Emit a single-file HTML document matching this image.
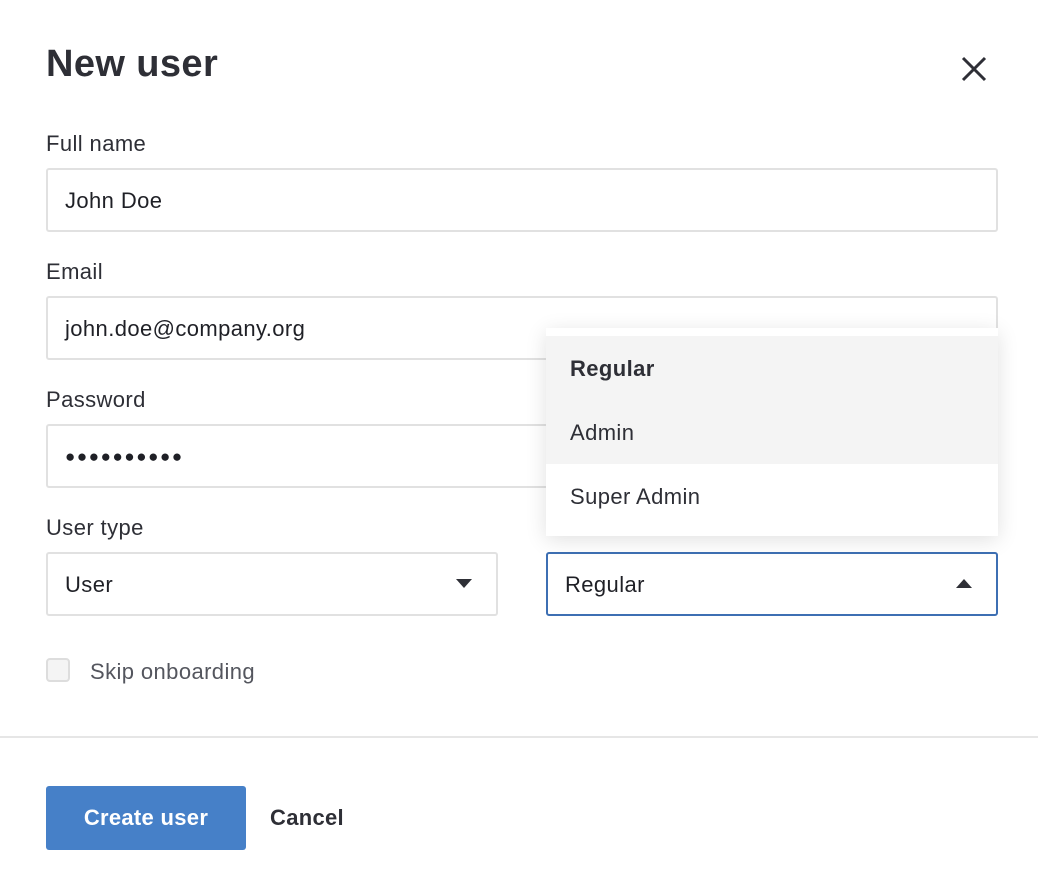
<!DOCTYPE html>
<html><head><style>
body{margin:0;width:1038px;height:878px;background:#fff;font-family:"Liberation Sans",sans-serif;color:#2e2f36;position:relative;overflow:hidden}
.a{position:absolute}
h1{position:absolute;left:46px;top:43px;margin:0;font-size:38px;font-weight:bold;color:#2e2f36;letter-spacing:0.4px}
.lbl{position:absolute;left:46px;font-size:22px;color:#2e2f36;letter-spacing:0.4px}
.inp{position:absolute;box-sizing:border-box;border:2px solid #e1e1e1;border-radius:3px;height:64px;font-size:22px;line-height:62px;padding-left:17px;color:#1f2026;letter-spacing:0.4px}
</style></head><body>
<h1>New user</h1>
<svg class="a" style="left:960px;top:55px" width="28" height="28" viewBox="0 0 28 28"><path d="M3 3L25 25M25 3L3 25" stroke="#2e2f36" stroke-width="3"/></svg>
<div class="lbl" style="top:131px">Full name</div>
<div class="inp" style="left:46px;top:168px;width:952px">John Doe</div>
<div class="lbl" style="top:259px">Email</div>
<div class="inp" style="left:46px;top:296px;width:952px">john.doe@company.org</div>
<div class="lbl" style="top:387px">Password</div>
<div class="inp" style="left:46px;top:424px;width:952px;letter-spacing:1.6px;font-size:17px">●●●●●●●●●●</div>
<div class="lbl" style="top:515px">User type</div>
<div class="inp" style="left:46px;top:552px;width:452px">User</div>
<svg class="a" style="left:456px;top:579px" width="16" height="10"><path d="M0 0H16L8 9Z" fill="#2e2f36"/></svg>
<div class="inp" style="left:546px;top:552px;width:452px;border-color:#3d6fb3">Regular</div>
<svg class="a" style="left:956px;top:579px" width="16" height="10"><path d="M0 9H16L8 0Z" fill="#2e2f36"/></svg>
<div class="a" style="left:546px;top:328px;width:452px;height:208px;background:#fff;box-shadow:0 4px 20px rgba(0,0,0,0.12)">
<div style="position:absolute;top:8px;left:0;right:0;height:128px;background:#f4f4f4"></div>
<div style="position:absolute;left:24px;top:28px;font-size:22px;font-weight:bold;letter-spacing:0.4px">Regular</div>
<div style="position:absolute;left:24px;top:92px;font-size:22px;letter-spacing:0.4px">Admin</div>
<div style="position:absolute;left:24px;top:156px;font-size:22px;letter-spacing:0.4px">Super Admin</div>
</div>
<div class="a" style="left:46px;top:658px;width:24px;height:24px;box-sizing:border-box;border:2px solid #ddd;border-radius:4px;background:#f4f4f4"></div>
<div class="a" style="left:90px;top:659px;font-size:22px;color:#54565e;letter-spacing:0.4px">Skip onboarding</div>
<div class="a" style="left:0;top:736px;width:1038px;height:2px;background:#e6e6e6"></div>
<div class="a" style="left:46px;top:786px;width:200px;height:64px;background:#4680c8;border-radius:3px;color:#fff;font-size:22px;font-weight:bold;text-align:center;line-height:64px;letter-spacing:0.3px">Create user</div>
<div class="a" style="left:270px;top:786px;line-height:64px;font-size:22px;font-weight:bold;color:#2e2f36;letter-spacing:0.3px">Cancel</div>
</body></html>
